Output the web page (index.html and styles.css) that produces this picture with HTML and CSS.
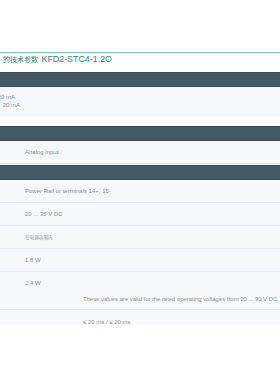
FILE: index.html
```html
<!DOCTYPE html>
<html lang="zh">
<head>
  <meta charset="UTF-8" />
  <title>KFD2-STC4-1.2O</title>
  <link rel="stylesheet" href="styles.css">
</head>
<body>
  <div class="sheet">
    <h2 class="title"><span class="cjk">的技术参数</span> KFD2-STC4-1.2O</h2>

    <div class="band"></div>
    <div class="row first">
      <div class="cut">
        <div>0 ... 20 mA</div>
        <div>0/4 ... 20 mA</div>
      </div>
    </div>

    <div class="band spaced"></div>
    <div class="row line">Analog input</div>

    <div class="band"></div>
    <div class="row">Power Rail or terminals 14+, 15-</div>
    <div class="row">20 ... 35 V DC</div>
    <div class="row"><span class="cjk">在电源容限内</span></div>
    <div class="row">1.8 W</div>
    <div class="row tall">
      <div>2.4 W</div>
      <div class="note">These values are valid for the rated operating voltages from 20 ... 30 V DC.</div>
    </div>
    <div class="row last"><span class="note">≤ 20 ms / ≤ 20 ms</span></div>
  </div>
</body>
</html>
```

FILE: styles.css
```css
body {
  margin: 0;
  padding: 0;
  background: #fff;
  font-family: "Liberation Sans", Arial, sans-serif;
  overflow: hidden;
}

.sheet {
  padding-top: 52px;
}

.cjk {
  font-family: "Noto Sans CJK SC", sans-serif;
}

.title {
  margin: 0;
  border-top: 1px solid #8dbbb4;
  padding: 1px 3px 7px;
  font-size: 8.9px;
  line-height: 11px;
  font-weight: normal;
  color: #35877e;
  white-space: nowrap;
}

.title .cjk {
  font-size: 7px;
  margin-right: 1px;
}

.band {
  height: 13px;
  background: #455865;
  border-top: 1px solid #3b4c57;
  border-bottom: 1px solid #3b4c57;
}

.band.spaced {
  margin-top: 9px;
}

.row {
  background: #f6f8f9;
  border-bottom: 1px solid #e7eaec;
  height: 23px;
  box-sizing: border-box;
  padding: 0 0 0 25px;
  font-size: 6px;
  line-height: 23px;
  color: #8b9196;
  white-space: nowrap;
}

.row .cjk {
  font-size: 4.6px;
}

.row.first {
  height: 30px;
  padding: 6px 0 0;
  line-height: 8px;
  border-bottom: none;
}

.cut {
  margin-left: -14px;
}

.row.line {
  height: 23px;
  margin-bottom: 1px;
  border-bottom-color: #dde2e5;
}

.row.tall {
  height: 38px;
  padding-top: 7px;
  line-height: 8px;
}

.row.tall .note {
  margin-top: 8px;
  font-size: 5.9px;
}

.note {
  display: block;
  margin-left: 58px;
}

.row.last {
  height: 15px;
  line-height: 25px;
  border-bottom: none;
}
```
